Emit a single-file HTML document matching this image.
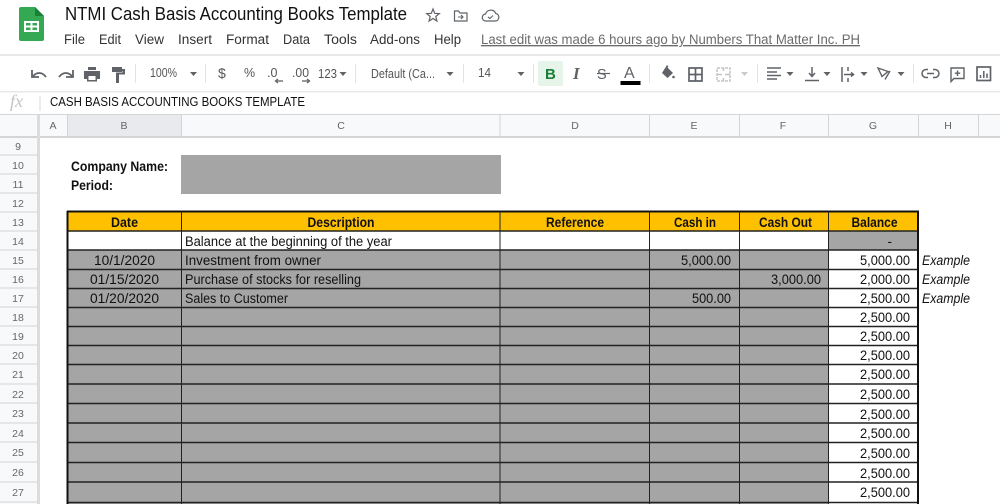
<!DOCTYPE html>
<html><head><meta charset="utf-8"><title>NTMI Cash Basis Accounting Books Template</title>
<style>
html,body{margin:0;padding:0;background:#fff;width:1000px;height:504px;overflow:hidden}
svg{display:block}
text{font-family:"Liberation Sans",sans-serif}
.m{font-size:13.5px;fill:#333}
.t{font-size:12.5px;fill:#555}
.h{font-size:10.5px;fill:#666;text-anchor:middle}
.c{font-size:13.5px;fill:#111}
.b{font-size:13.5px;font-weight:bold;fill:#111;text-anchor:middle}
.r{font-size:13.5px;fill:#111;text-anchor:end}
.e{font-size:13.5px;font-style:italic;fill:#111}
.d{fill:#5f6368}
.s{fill:none;stroke:#5f6368}
.g{stroke:#d4d4d4;stroke-width:1}
.k{stroke:#222;stroke-width:1.4}
</style></head><body>
<svg width="1000" height="504" viewBox="0 0 1000 504" xmlns="http://www.w3.org/2000/svg">
<!-- logo -->
<path d="M21 7h14l9 9v23a2 2 0 0 1-2 2H21a2 2 0 0 1-2-2V9a2 2 0 0 1 2-2z" fill="#34a853"/>
<path d="M35 7l9 9h-9z" fill="#188038"/>
<path d="M24 21h15v11H24z" fill="#fff"/><path d="M26 23h4.500v2.500H26zM32.500 23H37v2.500h-4.500zM26 27.500h4.500V30H26zM32.500 27.500H37V30h-4.500z" fill="#34a853"/>
<!-- title -->
<text x="65" y="20" font-size="18" fill="#111" textLength="342" lengthAdjust="spacingAndGlyphs">NTMI Cash Basis Accounting Books Template</text>
<path d="M433 9l1.700 4.300 4.600.3-3.500 2.900 1.100 4.500-3.900-2.500-3.900 2.500 1.100-4.500-3.500-2.900 4.600-.3z" class="s" style="stroke-width:1.200"/>
<path d="M454.500 11h4l1.500 2h7v8h-12.500z" class="s" style="stroke-width:1.200"/><path d="M458 17h5M461 15l2 2-2 2" class="s" style="stroke-width:1.100"/>
<path d="M486 21a3.500 3.500 0 0 1-.5-7 5.500 5.500 0 0 1 10.300-.5 3.800 3.800 0 0 1-.3 7.500z" class="s" style="stroke-width:1.200"/><path d="M488 17l2 1.500 3-3" class="s" style="stroke-width:1.100"/>
<!-- menu -->
<text class="m" x="64" y="44" textLength="21" lengthAdjust="spacingAndGlyphs">File</text>
<text class="m" x="99" y="44" textLength="22" lengthAdjust="spacingAndGlyphs">Edit</text>
<text class="m" x="135" y="44" textLength="29" lengthAdjust="spacingAndGlyphs">View</text>
<text class="m" x="178" y="44" textLength="34" lengthAdjust="spacingAndGlyphs">Insert</text>
<text class="m" x="226" y="44" textLength="43" lengthAdjust="spacingAndGlyphs">Format</text>
<text class="m" x="283" y="44" textLength="27" lengthAdjust="spacingAndGlyphs">Data</text>
<text class="m" x="324" y="44" textLength="33" lengthAdjust="spacingAndGlyphs">Tools</text>
<text class="m" x="370" y="44" textLength="50" lengthAdjust="spacingAndGlyphs">Add-ons</text>
<text class="m" x="434" y="44" textLength="27" lengthAdjust="spacingAndGlyphs">Help</text>
<text x="481" y="44" font-size="13.500" fill="#6b6b6b" text-decoration="underline" textLength="379" lengthAdjust="spacingAndGlyphs">Last edit was made 6 hours ago by Numbers That Matter Inc. PH</text>
<!-- toolbar -->
<rect x="0" y="54" width="1000" height="2" fill="#e8e8e8"/>
<rect x="0" y="91" width="1000" height="1.500" fill="#e8e8e8"/>
<path d="M135.500 64v19M205.500 64v19M355.500 64v19M463.500 64v19M533.500 64v19M649.500 64v19M757.500 64v19M913.500 64v19" stroke="#e3e3e3" fill="none"/>
<path d="M32 70v7h7" class="s" style="stroke-width:1.800"/><path d="M33 76.500c3-4.500 9-5 13 .5" class="s" style="stroke-width:1.800"/>
<path d="M73 70v7h-7" class="s" style="stroke-width:1.800"/><path d="M72 76.500c-3-4.500-9-5-13 .5" class="s" style="stroke-width:1.800"/>
<path class="d" d="M88 67h8v3h-8zM84.500 71h15a.5.500 0 0 1 .5.500V79h-3v2.500H87V79h-3v-7.500a.5.500 0 0 1 .5-.5z"/><rect x="88.500" y="76" width="7" height="4" fill="#fff"/>
<path class="d" d="M112 67h10v5h-10zM122 69h3v5.500h-6V83h-3V72.500h6.500V71H122z"/>
<text class="t" x="150" y="77" textLength="27" lengthAdjust="spacingAndGlyphs" style="font-size:13px">100%</text>
<path class="d" d="M190 72h7l-3.500 4z"/>
<text class="t" x="218" y="78" style="font-size:14px">$</text>
<text class="t" x="244" y="77">%</text>
<text class="t" x="267" y="77">.0</text>
<path d="M283 81h-7" class="s" style="stroke-width:1.300"/><path d="M278 79l-2.500 2 2.500 2" class="s" style="stroke-width:1.300"/>
<text class="t" x="292" y="77" textLength="17" lengthAdjust="spacingAndGlyphs">.00</text>
<path d="M302 81h7" class="s" style="stroke-width:1.300"/><path d="M307 79l2.500 2-2.500 2" class="s" style="stroke-width:1.300"/>
<text class="t" x="318" y="78" textLength="19" lengthAdjust="spacingAndGlyphs" style="font-size:13px">123</text>
<path class="d" d="M339.500 72h7l-3.500 4z"/>
<text class="t" x="371" y="78" textLength="64" lengthAdjust="spacingAndGlyphs" style="font-size:13px">Default (Ca...</text>
<path class="d" d="M446.500 72h7l-3.500 4z"/>
<text class="t" x="478" y="77" textLength="13" lengthAdjust="spacingAndGlyphs" style="font-size:13px">14</text>
<path class="d" d="M517.500 72h7l-3.500 4z"/>
<rect x="538" y="61" width="25" height="25" rx="2" fill="#e6f4ea"/>
<text x="545" y="79" font-size="15" font-weight="bold" fill="#188038">B</text>
<text x="573" y="79" font-style="italic" font-weight="bold" fill="#5f6368" style="font-family:'Liberation Serif',serif;font-size:17px">I</text>
<text x="597" y="79" font-size="14.500" fill="#5f6368">S</text><path d="M597 73.500h13" class="s" style="stroke-width:1.200"/>
<text x="624" y="78" font-size="16" fill="#5f6368">A</text>
<rect x="620.500" y="81" width="20" height="4" fill="#000"/>
<path class="d" d="M667 65l1.500 1.500-1 1 5.500 5.500-5.500 5-5.500-5z"/><circle cx="673.500" cy="77" r="1.300" fill="#5f6368"/>
<path d="M689 68h13v13h-13zM695.500 68v13M689 74.500h13" class="s" style="stroke-width:1.700"/>
<path d="M717 68h13v13h-13z" fill="none" stroke="#c4c6c9" stroke-width="1.500" stroke-dasharray="3 1"/>
<path d="M723.500 68v3M723.500 78v3M717 74.500h5M725 74.500h5" fill="none" stroke="#c4c6c9" stroke-width="1.500"/>
<path fill="#c8cacc" d="M741 72h7l-3.500 4z"/>
<path d="M767 68h14M767 72h10M767 75.500h14M767 79h10" class="s" style="stroke-width:1.500"/>
<path class="d" d="M786.500 72h7l-3.500 4z"/>
<path d="M805 80.500h14M812 67v9M809 73l3 3.500 3-3.500" class="s" style="stroke-width:1.500"/>
<path class="d" d="M823.500 72h7l-3.500 4z"/>
<path d="M842 67v15M848 67v4M848 78v4M844 74.500h9M851 72.500l2.500 2-2.500 2" class="s" style="stroke-width:1.500"/>
<path class="d" d="M860.500 72h7l-3.500 4z"/>
<path d="M878 68l10 3.500-6 5zM890 71l-5 8.500" class="s" style="stroke-width:1.400"/>
<path class="d" d="M897.500 72h7l-3.500 4z"/>
<path d="M928 69.500h-2a4 4 0 0 0 0 8h2M933 69.500h2a4 4 0 0 1 0 8h-2M927 73.500h7" class="s" style="stroke-width:1.500"/>
<path d="M951 68h13v10.500h-10l-3 3zM957.500 70.500v5.500M954.800 73.200h5.400" class="s" style="stroke-width:1.400"/>
<rect x="977" y="67" width="13.500" height="13.500" class="s" style="stroke-width:1.700"/><path d="M980.500 75v3M983.800 71v7M987 73.500v4.500" class="s" style="stroke-width:1.500"/>
<!-- formula bar -->
<text x="10" y="107" font-style="italic" fill="#c4c4c4" style="font-family:'Liberation Serif',serif;font-size:18px">fx</text>
<rect x="39.500" y="96" width="1" height="15" fill="#d8d8d8"/>
<text x="50" y="106" font-size="12.500" fill="#111" textLength="255" lengthAdjust="spacingAndGlyphs">CASH BASIS ACCOUNTING BOOKS TEMPLATE</text>
<!-- column headers -->
<rect x="0" y="114" width="1000" height="23" fill="#f8f9fa"/>
<rect x="67" y="115" width="114" height="22" fill="#e8eaed"/>
<rect x="0" y="114" width="1000" height="1" fill="#d5d5d5"/>
<rect x="0" y="136" width="1000" height="2" fill="#d5d5d5"/>
<rect x="37" y="115" width="3" height="389" fill="#dcdcdc"/>
<path class="g" d="M67.500 115v22M181.500 115v22M500 115v22M649.500 115v22M739.500 115v22M828.500 115v22M918.500 115v22M978.500 115v22" fill="none"/>
<text class="h" x="53" y="129">A</text><text class="h" x="124" y="129">B</text><text class="h" x="341" y="129">C</text><text class="h" x="575" y="129">D</text><text class="h" x="694" y="129">E</text><text class="h" x="783" y="129">F</text><text class="h" x="873" y="129">G</text><text class="h" x="948" y="129">H</text>
<!-- row headers -->
<rect x="0" y="138" width="37" height="366" fill="#f8f9fa"/>
<path class="g" d="M0 155h37M0 174h37M0 193h37M0 212h37M0 231h37M0 250h37M0 269h37M0 288h37M0 307h37M0 326h37M0 345h37M0 364h37M0 384h37M0 403h37M0 423h37M0 442h37M0 462h37M0 482h37M0 502h37" fill="none"/>
<text class="h" x="18" y="150">9</text><text class="h" x="18" y="169">10</text><text class="h" x="18" y="188">11</text><text class="h" x="18" y="207">12</text><text class="h" x="18" y="226">13</text><text class="h" x="18" y="245">14</text><text class="h" x="18" y="264">15</text><text class="h" x="18" y="283">16</text><text class="h" x="18" y="302">17</text><text class="h" x="18" y="321">18</text><text class="h" x="18" y="340">19</text><text class="h" x="18" y="359">20</text><text class="h" x="18" y="378">21</text><text class="h" x="18" y="398">22</text><text class="h" x="18" y="417">23</text><text class="h" x="18" y="437">24</text><text class="h" x="18" y="456">25</text><text class="h" x="18" y="476">26</text><text class="h" x="18" y="496">27</text>
<!-- company -->
<text x="71" y="171" font-size="13.500" font-weight="bold" fill="#111" textLength="97" lengthAdjust="spacingAndGlyphs">Company Name:</text>
<text x="71" y="190" font-size="13.500" font-weight="bold" fill="#111" textLength="42" lengthAdjust="spacingAndGlyphs">Period:</text>
<rect x="181" y="155" width="320" height="39" fill="#a5a5a5"/>
<!-- table fills -->
<rect x="67" y="212" width="851" height="19" fill="#ffc000"/>
<rect x="67" y="250" width="762" height="254" fill="#a5a5a5"/>
<rect x="829" y="231" width="89" height="19" fill="#a5a5a5"/>
<!-- table lines -->
<path d="M67 211.500h852" stroke="#111" stroke-width="2"/>
<path d="M67 231h852M67 250h852M67 269.500h852M67 288.500h852M67 307.500h852M67 326.500h852M67 345.500h852M67 364.500h852M67 384h852M67 403.500h852M67 423h852M67 442.500h852M67 462.500h852M67 482h852M67 502.500h852" class="k" fill="none"/>
<path d="M67.500 211v293" stroke="#111" stroke-width="2"/>
<path d="M918 211v293" stroke="#111" stroke-width="2"/>
<path d="M181.500 211v293M500 211v293M649.500 211v293M739.500 211v293M828.500 211v293" stroke="#222" stroke-width="1" fill="none"/>
<!-- headers -->
<text class="b" x="124.500" y="227" textLength="27" lengthAdjust="spacingAndGlyphs">Date</text>
<text class="b" x="341" y="227" textLength="67" lengthAdjust="spacingAndGlyphs">Description</text>
<text class="b" x="575" y="227" textLength="58" lengthAdjust="spacingAndGlyphs">Reference</text>
<text class="b" x="695" y="227" textLength="42" lengthAdjust="spacingAndGlyphs">Cash in</text>
<text class="b" x="785.500" y="227" textLength="53" lengthAdjust="spacingAndGlyphs">Cash Out</text>
<text class="b" x="874.500" y="227" textLength="46" lengthAdjust="spacingAndGlyphs">Balance</text>
<!-- body -->
<text class="c" x="185" y="246" textLength="207" lengthAdjust="spacingAndGlyphs">Balance at the beginning of the year</text>
<text class="r" x="892" y="246">-</text>
<text class="c" x="94" y="265" textLength="61" lengthAdjust="spacingAndGlyphs">10/1/2020</text>
<text class="c" x="90" y="284" textLength="69" lengthAdjust="spacingAndGlyphs">01/15/2020</text>
<text class="c" x="90" y="303" textLength="69" lengthAdjust="spacingAndGlyphs">01/20/2020</text>
<text class="c" x="185" y="265" textLength="136" lengthAdjust="spacingAndGlyphs">Investment from owner</text>
<text class="c" x="185" y="284" textLength="176" lengthAdjust="spacingAndGlyphs">Purchase of stocks for reselling</text>
<text class="c" x="185" y="303" textLength="103" lengthAdjust="spacingAndGlyphs">Sales to Customer</text>
<text class="c" x="681" y="265" textLength="50" lengthAdjust="spacingAndGlyphs">5,000.00</text>
<text class="c" x="771" y="284" textLength="50" lengthAdjust="spacingAndGlyphs">3,000.00</text>
<text class="c" x="692" y="303" textLength="39" lengthAdjust="spacingAndGlyphs">500.00</text>
<text class="c" x="860" y="265" textLength="50" lengthAdjust="spacingAndGlyphs">5,000.00</text>
<text class="c" x="860" y="284" textLength="50" lengthAdjust="spacingAndGlyphs">2,000.00</text>
<text class="c" x="860" y="303" textLength="50" lengthAdjust="spacingAndGlyphs">2,500.00</text>
<text class="c" x="860" y="322" textLength="50" lengthAdjust="spacingAndGlyphs">2,500.00</text>
<text class="c" x="860" y="341" textLength="50" lengthAdjust="spacingAndGlyphs">2,500.00</text>
<text class="c" x="860" y="360" textLength="50" lengthAdjust="spacingAndGlyphs">2,500.00</text>
<text class="c" x="860" y="379" textLength="50" lengthAdjust="spacingAndGlyphs">2,500.00</text>
<text class="c" x="860" y="399" textLength="50" lengthAdjust="spacingAndGlyphs">2,500.00</text>
<text class="c" x="860" y="419" textLength="50" lengthAdjust="spacingAndGlyphs">2,500.00</text>
<text class="c" x="860" y="438" textLength="50" lengthAdjust="spacingAndGlyphs">2,500.00</text>
<text class="c" x="860" y="458" textLength="50" lengthAdjust="spacingAndGlyphs">2,500.00</text>
<text class="c" x="860" y="478" textLength="50" lengthAdjust="spacingAndGlyphs">2,500.00</text>
<text class="c" x="860" y="497" textLength="50" lengthAdjust="spacingAndGlyphs">2,500.00</text>
<text class="e" x="922" y="265" textLength="48" lengthAdjust="spacingAndGlyphs">Example</text>
<text class="e" x="922" y="284" textLength="48" lengthAdjust="spacingAndGlyphs">Example</text>
<text class="e" x="922" y="303" textLength="48" lengthAdjust="spacingAndGlyphs">Example</text>
</svg>
</body></html>
